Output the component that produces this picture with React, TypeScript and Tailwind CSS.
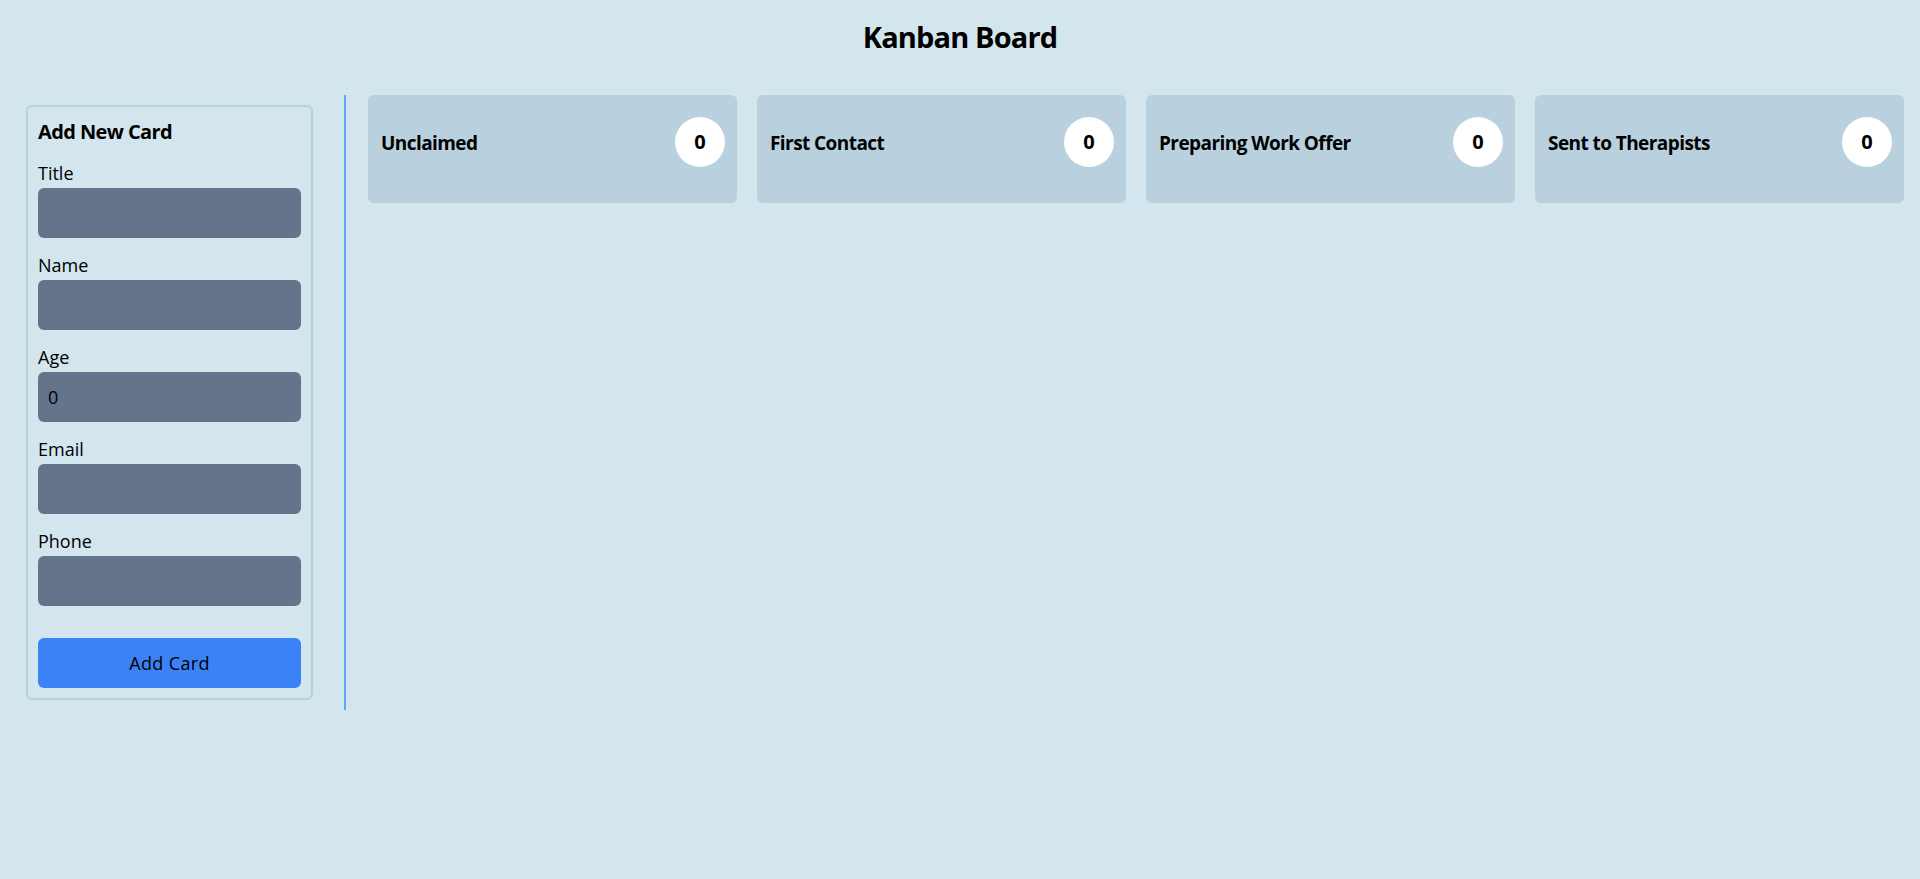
import { useState } from "react";

const columns = [
  { title: "Unclaimed", count: 0 },
  { title: "First Contact", count: 0 },
  { title: "Preparing Work Offer", count: 0 },
  { title: "Sent to Therapists", count: 0 },
];

const fields = [
  { label: "Title", type: "text", init: "" },
  { label: "Name", type: "text", init: "" },
  { label: "Age", type: "number", init: "0" },
  { label: "Email", type: "email", init: "" },
  { label: "Phone", type: "tel", init: "" },
];

export default function App() {
  const [values, setValues] = useState<Record<string, string>>(
    Object.fromEntries(fields.map((f) => [f.label, f.init]))
  );

  return (
    <div className="min-h-screen bg-[#d3e5ed] text-black font-['Open_Sans',sans-serif]">
      <h1 className="pt-[19px] text-center text-[29px] leading-[36px] font-bold tracking-[-0.03em]">
        Kanban Board
      </h1>

      <div className="mt-[40px] flex items-start">
        {/* sidebar */}
        <div className="w-[346px] shrink-0 border-r-2 border-[#60a5fa] pl-[26px] pt-[10px] pb-[10px]">
          <div className="w-[287px] rounded-md border-2 border-[#b9d0df] px-[10px] pt-[11px] pb-[10px]">
            <h2 className="text-[20px] leading-[28px] font-bold tracking-[-0.03em]">Add New Card</h2>
            <div className="mt-[14px] flex flex-col gap-[14px]">
              {fields.map((f) => (
                <div key={f.label}>
                  <label className="block pt-[1px] text-[18px] leading-[24px]">{f.label}</label>
                  <input
                    type={f.type}
                    value={values[f.label]}
                    onChange={(e) => setValues({ ...values, [f.label]: e.target.value })}
                    className="mt-[3px] block h-[50px] w-full rounded-md bg-[#64748b] px-[10px] text-[18px] outline-none [appearance:textfield] [&::-webkit-inner-spin-button]:appearance-none"
                  />
                </div>
              ))}
            </div>
            <button className="mt-[32px] h-[50px] w-full rounded-md bg-[#3b82f6] text-[18px] tracking-[0.02em]">
              Add Card
            </button>
          </div>
        </div>

        {/* board */}
        <div className="grid flex-1 grid-cols-4 gap-5 pl-[22px] pr-4">
          {columns.map((c) => (
            <div key={c.title} className="rounded-md bg-[#b9d0de] pt-[22px] pb-[36px] pl-[13px] pr-3">
              <div className="flex items-center justify-between">
                <h3 className="pt-[2px] text-[19px] font-bold tracking-[-0.03em]">{c.title}</h3>
                <div className="flex h-[50px] w-[50px] items-center justify-center rounded-full bg-white text-[20px] font-bold">
                  {c.count}
                </div>
              </div>
            </div>
          ))}
        </div>
      </div>
    </div>
  );
}
